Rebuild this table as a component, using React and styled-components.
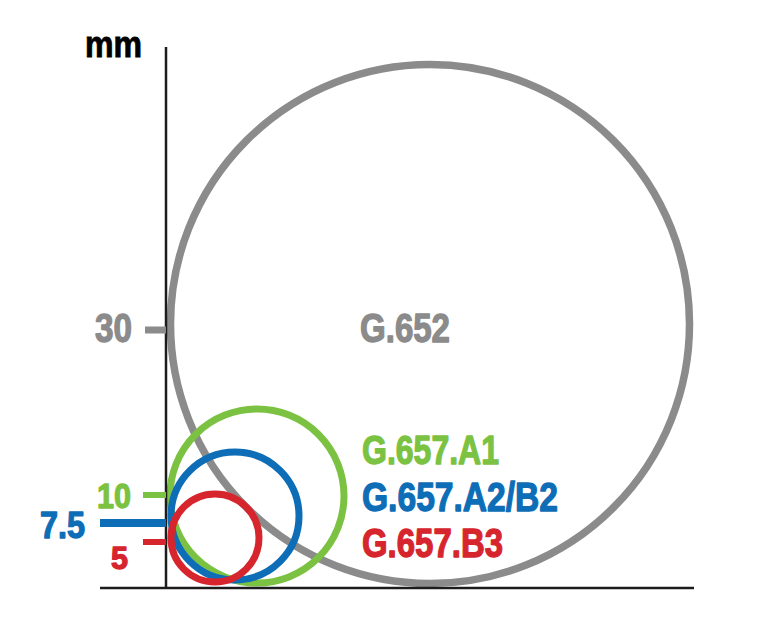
import styled, { createGlobalStyle } from 'styled-components';

const colors = {
  axis: '#1c1c1c',
  gray: '#8b8b8b',
  green: '#7cc242',
  blue: '#0d6db6',
  red: '#d7252e',
};

// bend radius circles, drawn at chart coordinates (px)
const circles = [
  { id: 'g652', cx: 430, cy: 324, r: 259.5, color: colors.gray, width: 7.5 },
  { id: 'a1', cx: 257, cy: 496, r: 87, color: colors.green, width: 7 },
  { id: 'a2', cx: 235, cy: 516, r: 64, color: colors.blue, width: 7 },
  { id: 'b3', cx: 215, cy: 538, r: 44, color: colors.red, width: 7 },
];

const ticks = [
  { id: 't30', x1: 145, x2: 166, y: 330, color: colors.gray, width: 7 },
  { id: 't10', x1: 143, x2: 166, y: 495, color: colors.green, width: 6 },
  { id: 't75', x1: 100, x2: 166, y: 523, color: colors.blue, width: 8 },
  { id: 't5', x1: 143, x2: 166, y: 542, color: colors.red, width: 6 },
];

const labels = [
  { id: 'l30', text: '30', x: 95, y: 342, size: 40, length: 37, color: colors.gray },
  { id: 'l10', text: '10', x: 97, y: 508, size: 35, length: 34, color: colors.green },
  { id: 'l75', text: '7.5', x: 40, y: 538, size: 36, length: 45, color: colors.blue },
  { id: 'l5', text: '5', x: 111, y: 569, size: 31, length: 17, color: colors.red },
  { id: 'n652', text: 'G.652', x: 360, y: 342, size: 40, length: 90, color: colors.gray },
  { id: 'na1', text: 'G.657.A1', x: 362, y: 464, size: 40, length: 137, color: colors.green },
  { id: 'na2', text: 'G.657.A2/B2', x: 362, y: 511, size: 40, length: 196, color: colors.blue },
  { id: 'nb3', text: 'G.657.B3', x: 362, y: 557, size: 40, length: 141, color: colors.red },
];

const App = () => {
  return (
    <>
      <GlobalStyle />
      <Page>
        <Chart viewBox='0 0 758 627' width='758' height='627'>
          {circles.map(({ id, cx, cy, r, color, width }) => (
            <circle
              key={id}
              cx={cx}
              cy={cy}
              r={r}
              fill='none'
              stroke={color}
              strokeWidth={width}
            />
          ))}

          <line x1='166' y1='47' x2='166' y2='589' stroke={colors.axis} strokeWidth='2.5' />
          <line x1='100' y1='588' x2='694' y2='588' stroke={colors.axis} strokeWidth='2.5' />

          {ticks.map(({ id, x1, x2, y, color, width }) => (
            <line key={id} x1={x1} y1={y} x2={x2} y2={y} stroke={color} strokeWidth={width} />
          ))}

          <Unit x='85' y='57' textLength='57' lengthAdjust='spacingAndGlyphs'>
            mm
          </Unit>

          {labels.map(({ id, text, x, y, size, length, color }) => (
            <Label
              key={id}
              x={x}
              y={y}
              $size={size}
              $color={color}
              textLength={length}
              lengthAdjust='spacingAndGlyphs'
            >
              {text}
            </Label>
          ))}
        </Chart>
      </Page>
    </>
  );
};

const GlobalStyle = createGlobalStyle`
  html, body {
    margin: 0;
    padding: 0;
    background: #ffffff;
  }
`;

const Page = styled.div`
  width: 758px;
  height: 627px;
  background: #ffffff;
  overflow: hidden;
`;

const Chart = styled.svg`
  display: block;
`;

const Unit = styled.text`
  font-family: 'Liberation Sans', Arial, sans-serif;
  font-weight: 700;
  font-size: 36px;
  fill: #000000;
  stroke: #000000;
  stroke-width: 0.9px;
`;

const Label = styled.text`
  font-family: 'Liberation Sans', Arial, sans-serif;
  font-weight: 700;
  font-size: ${({ $size }) => $size}px;
  fill: ${({ $color }) => $color};
  stroke: ${({ $color }) => $color};
  stroke-width: 1.3px;
  stroke-linejoin: round;
`;

export default App;
